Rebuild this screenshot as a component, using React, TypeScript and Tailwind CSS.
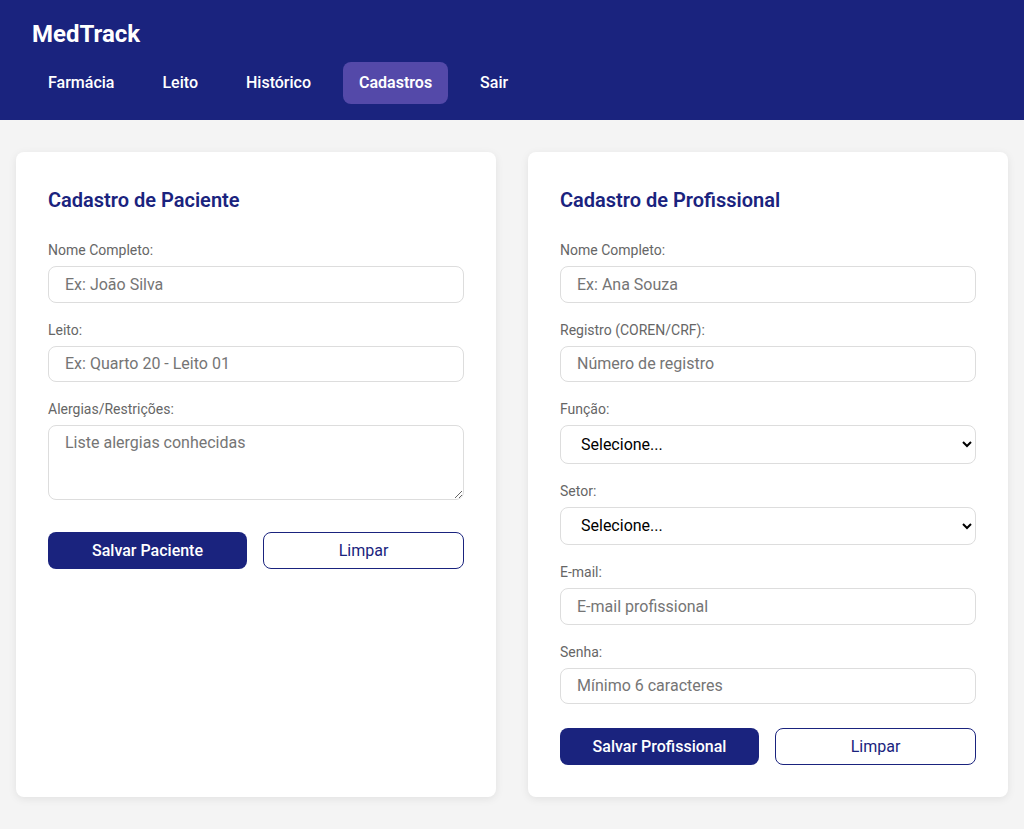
import React from "react";

const navItems = ["Farmácia", "Leito", "Histórico", "Cadastros", "Sair"];

function Label({ children }: { children: React.ReactNode }) {
  return (
    <label className="block text-sm leading-[17px] text-[#666] mb-[7px]">
      {children}
    </label>
  );
}

function Field({ label, placeholder }: { label: string; placeholder: string }) {
  return (
    <div className="mb-[19px]">
      <Label>{label}</Label>
      <input
        type="text"
        placeholder={placeholder}
        className="block w-full h-[36.5px] rounded-lg border border-[#ddd] bg-white px-4 text-base text-black placeholder:text-[#757575] outline-none"
      />
    </div>
  );
}

function SelectField({ label }: { label: string }) {
  return (
    <div className="mb-[19px]">
      <Label>{label}</Label>
      <select className="block w-full h-[38.5px] rounded-lg border border-[#ddd] bg-white px-4 text-base text-black outline-none">
        <option>Selecione...</option>
      </select>
    </div>
  );
}

function Buttons({ primary }: { primary: string }) {
  return (
    <div className="flex gap-4">
      <button className="flex-1 h-[37px] rounded-lg bg-[#1a237e] text-white text-base font-medium">
        {primary}
      </button>
      <button className="flex-1 h-[37px] rounded-lg border border-[#1a237e] bg-white text-[#1a237e] text-base">
        Limpar
      </button>
    </div>
  );
}

function Card({ title, children }: { title: string; children: React.ReactNode }) {
  return (
    <div className="bg-white rounded-lg shadow-[0_2px_8px_rgba(0,0,0,0.08)] p-8">
      <h2 className="text-xl font-semibold text-[#1a237e] leading-[32px] mb-[26px]">
        {title}
      </h2>
      {children}
    </div>
  );
}

export default function App() {
  return (
    <div
      className="min-h-[829px] bg-[#f4f4f4]"
      style={{ fontFamily: "Roboto, 'Liberation Sans', sans-serif" }}
    >
      <header className="bg-[#1a237e] h-[120px] pt-5 px-8">
        <h1 className="text-white text-2xl font-bold leading-[29px] mb-[13px]">MedTrack</h1>
        <nav className="flex gap-4">
          {navItems.map((item) => (
            <a
              key={item}
              className={
                item === "Cadastros"
                  ? "h-[42px] px-4 flex items-center rounded-lg bg-[#5449a9] text-white text-base font-semibold"
                  : "h-[42px] px-4 flex items-center rounded-lg text-white text-base font-medium"
              }
            >
              {item}
            </a>
          ))}
        </nav>
      </header>
      <main className="grid grid-cols-2 gap-8 px-4 pt-8 pb-8">
        <Card title="Cadastro de Paciente">
          <Field label="Nome Completo:" placeholder="Ex: João Silva" />
          <Field label="Leito:" placeholder="Ex: Quarto 20 - Leito 01" />
          <div className="mb-8">
            <Label>Alergias/Restrições:</Label>
            <textarea
              placeholder="Liste alergias conhecidas"
              className="block w-full h-[75px] rounded-lg border border-[#ddd] bg-white px-4 py-[5px] text-base placeholder:text-[#757575] outline-none"
            />
          </div>
          <Buttons primary="Salvar Paciente" />
        </Card>
        <Card title="Cadastro de Profissional">
          <Field label="Nome Completo:" placeholder="Ex: Ana Souza" />
          <Field label="Registro (COREN/CRF):" placeholder="Número de registro" />
          <SelectField label="Função:" />
          <SelectField label="Setor:" />
          <Field label="E-mail:" placeholder="E-mail profissional" />
          <div className="mb-6">
            <Label>Senha:</Label>
            <input
              type="password"
              placeholder="Mínimo 6 caracteres"
              className="block w-full h-[36.5px] rounded-lg border border-[#ddd] bg-white px-4 text-base placeholder:text-[#757575] outline-none"
            />
          </div>
          <Buttons primary="Salvar Profissional" />
        </Card>
      </main>
    </div>
  );
}
